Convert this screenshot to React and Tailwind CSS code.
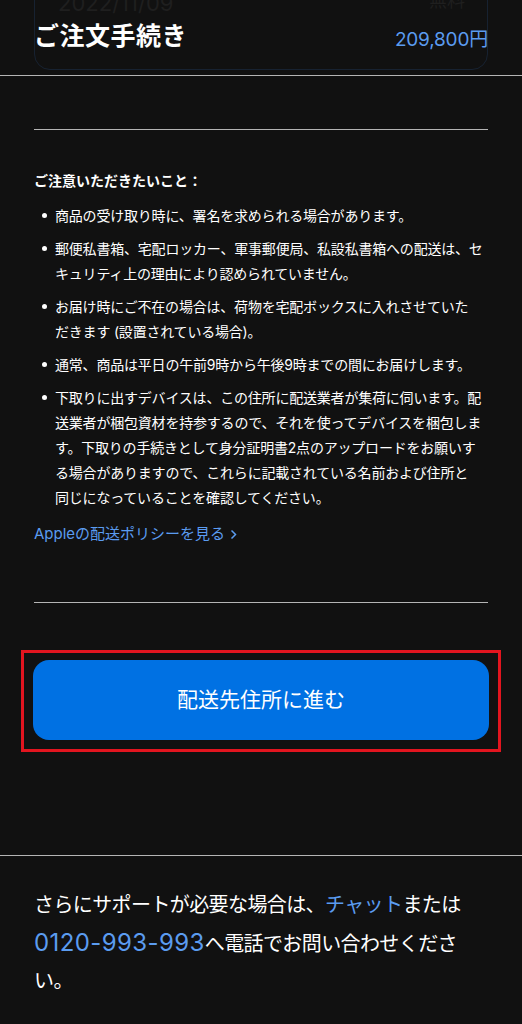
import React from 'react';

const notes = [
  ['商品の受け取り時に、署名を求められる場合があります。'],
  ['郵便私書箱、宅配ロッカー、軍事郵便局、私設私書箱への配送は、セ', 'キュリティ上の理由により認められていません。'],
  ['お届け時にご不在の場合は、荷物を宅配ボックスに入れさせていた', 'だきます (設置されている場合)。'],
  ['通常、商品は平日の午前9時から午後9時までの間にお届けします。'],
  [
    '下取りに出すデバイスは、この住所に配送業者が集荷に伺います。配',
    '送業者が梱包資材を持参するので、それを使ってデバイスを梱包しま',
    'す。下取りの手続きとして身分証明書2点のアップロードをお願いす',
    'る場合がありますので、これらに記載されている名前および住所と',
    '同じになっていることを確認してください。',
  ],
];

const App = () => {
  return (
    <div
      className="min-h-screen w-full overflow-hidden bg-[#111111] text-white"
      style={{ fontFamily: '"Inter", "Noto Sans CJK JP", sans-serif' }}
    >
      {/* sticky header over the scrolled summary card */}
      <div className="relative h-[76px] border-b border-[#b5b5b5]">
        <div className="absolute left-[34px] right-[34px] top-[-40px] h-[110px] rounded-2xl border border-[#172231]">
          <div className="flex items-start justify-between pl-[23px] pr-[22px] pt-[31px]">
            <span className="text-[22px] leading-none text-[#1f1f1f]">2022/11/09</span>
            <span className="text-[18px] leading-none text-[#1f1f1f]">無料</span>
          </div>
        </div>
        <div className="relative flex h-full items-center justify-between px-[34px] pb-[2px]">
          <h1 className="text-[25px] font-bold leading-none tracking-[0.5px]">ご注文手続き</h1>
          <span className="mt-[6px] text-[19px] leading-none tracking-[-0.2px] text-[#5b9cf0]">209,800円</span>
        </div>
      </div>

      <div className="px-[34px]">
        <div className="mt-[53px] border-t border-[#b5b5b5]" />

        <h2 className="mt-[41px] text-[14px] font-bold leading-[20px]">ご注意いただきたいこと：</h2>

        <ul className="mt-[12px] flex flex-col gap-[8px]">
          {notes.map((lines, i) => (
            <li key={i} className="flex text-[14px] leading-[25px]">
              <span className="flex w-[21px] shrink-0 pt-[10px] pl-[8px]">
                <span className="h-[5px] w-[5px] rounded-full bg-white" />
              </span>
              <span className="whitespace-nowrap tracking-[-0.2px]">
                {lines.map((l, j) => (
                  <React.Fragment key={j}>
                    {l}
                    {j < lines.length - 1 && <br />}
                  </React.Fragment>
                ))}
              </span>
            </li>
          ))}
        </ul>

        <a className="mt-[13px] flex items-center gap-[5px] text-[15px] leading-[22px] text-[#5b9cf0]">
          Appleの配送ポリシーを見る
          <svg width="7" height="11" viewBox="0 0 7 11" fill="none">
            <path d="M1.5 1.5L5.5 5.5L1.5 9.5" stroke="#5b9cf0" strokeWidth="1.5" />
          </svg>
        </a>

        <div className="mt-[57px] border-t border-[#b5b5b5]" />

        <div className="-mx-[13px] mt-[47px] border-[3px] border-[#e3151f] px-[9px] pt-[7px] pb-[9px]">
          <button className="flex h-[80px] w-full items-center justify-center rounded-[16px] bg-[#0071e3] text-[21px] text-white">
            配送先住所に進む
          </button>
        </div>
      </div>

      <div className="mt-[103px] border-t border-[#b5b5b5]" />

      <p className="px-[34px] pt-[31px] text-[20px] leading-[37px] tracking-[-0.6px]">
        さらにサポートが必要な場合は、<span className="text-[#5b9cf0]">チャット</span>または
        <br />
        <span className="text-[24px] tracking-[0.4px] text-[#5b9cf0]">0120-993-993</span>へ電話でお問い合わせくださ
        <br />
        い。
      </p>
    </div>
  );
};

export default App;
